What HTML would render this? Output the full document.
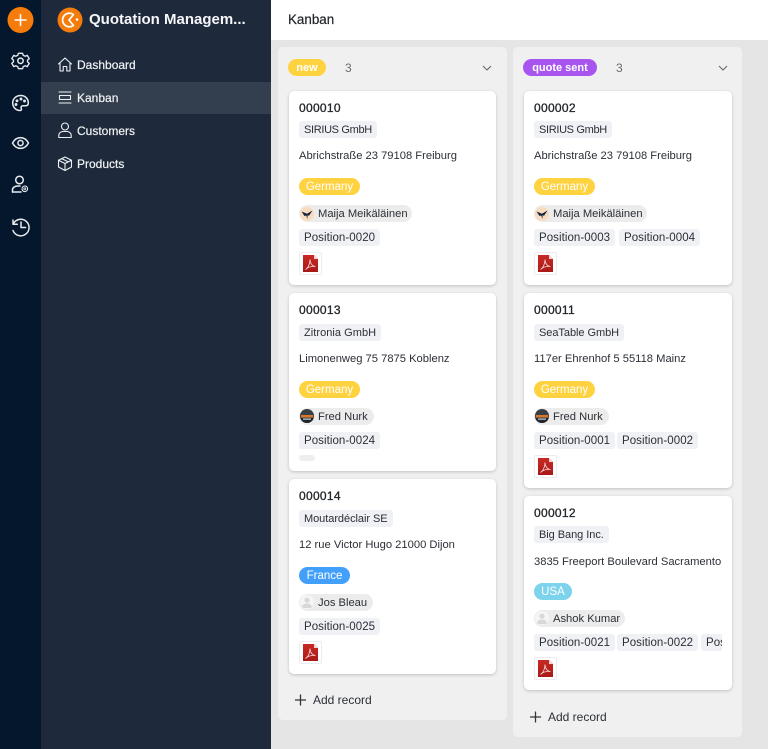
<!DOCTYPE html>
<html lang="en"><head><meta charset="utf-8"><title>Kanban</title>
<style>
*{box-sizing:border-box}
html,body{margin:0;padding:0;width:768px;height:749px;overflow:hidden;background:#e5e5e5;font-family:"Liberation Sans",Arial,sans-serif;color:#212529}
#wrap{position:absolute;left:0;top:0;width:768px;height:749px;overflow:hidden;filter:blur(.35px)}
.a{position:absolute}
#rail{left:0;top:0;width:41px;height:749px;background:#05172c}
#side{left:41px;top:0;width:230px;height:749px;background:#1e293b}
#active{left:41px;top:82px;width:230px;height:32px;background:#333e4e}
#head{left:271px;top:0;width:497px;height:40px;background:#fff;font-size:13.4px;line-height:40px;padding-left:17px;color:#212529;-webkit-text-stroke:.2px #212529}
.nav{left:77px;width:150px;font-size:12px;line-height:16px;color:#f1f3f5;-webkit-text-stroke:.2px #f1f3f5}
.col{background:#f0f0f0;border-radius:5px}
.card{left:11px;background:#fff;border-radius:5px;box-shadow:0 1px 3px rgba(0,0,0,.2);overflow:hidden}
.t{left:10px;font-size:12px;line-height:16px;white-space:nowrap;letter-spacing:.3px;-webkit-text-stroke:.3px #212529}
.tag{height:17px;background:#f0f1f5;border-radius:3px;font-size:11.5px;line-height:19px;padding:0 5px;white-space:nowrap;color:#2b2f36;overflow:hidden}
.p{letter-spacing:.06px}
.addr{left:10px;width:188px;font-size:11.2px;line-height:16px;white-space:nowrap;overflow:hidden;color:#2b2f36}
.pill{left:10px;height:17px;border-radius:9px;color:#fff;font-size:11.5px;line-height:18.500px;text-align:center}
.coll{left:10px;height:17px;border-radius:9px;background:#ececec;font-size:11.2px;line-height:19px;padding-left:19px;white-space:nowrap;color:#2b2f36}
.ava{left:11px;width:14px;height:14px;border-radius:50%;overflow:hidden}
.pdf{left:10px;width:23px;height:23px;border:1px solid #ececec;border-radius:2px}
.clip{left:10px;width:188px;overflow:hidden}
.count{font-size:12px;color:#6b6b6b;line-height:16px}
.stat{height:17px;border-radius:9px;color:#fff;font-size:11px;font-weight:bold;line-height:18px;text-align:center}
.add{font-size:12px;line-height:16px;color:#2b2f36}
.co{font-size:11px;letter-spacing:-.05px}
</style></head><body>
<svg width="0" height="0" style="position:absolute"><defs>
<linearGradient id="pg" x1="0" y1="0" x2="0" y2="1"><stop offset="0" stop-color="#c92a26"/><stop offset="1" stop-color="#a81a18"/></linearGradient>
<symbol id="pdfi" viewBox="0 0 15 17"><path d="M0 0H11L15 4V17H0Z" fill="url(#pg)"/><path d="M11 0L15 4H11Z" fill="#f3d6d6"/><path d="M2.500 14.500C5 13 7 9 7 4.500C7 8 9 11 12.500 11.500C9 11 5 12 2.500 14.500Z" fill="none" stroke="#f8dcdc" stroke-width=".8"/></symbol>
<symbol id="maija" viewBox="0 0 14 14"><rect width="14" height="14" fill="#f7dcc0"/><path d="M1.500 4.500L7 6.800L12.500 3.500L9 8.800L7.500 8.300L7.500 12L6.200 8.500L4.500 9Z" fill="#14233f"/></symbol>
<symbol id="fred" viewBox="0 0 14 14"><rect width="14" height="14" fill="#3a3f45"/><rect x="1" y="6" width="12" height="2.500" fill="#d9782c"/><rect y="9" width="14" height="5" fill="#20252b"/><rect x="3" y="9.500" width="8" height="1.200" fill="#cfd6dc"/></symbol>
<symbol id="anon" viewBox="0 0 14 14"><rect width="14" height="14" fill="#f5f5f5"/><circle cx="7" cy="5.200" r="2.600" fill="#d8d8d8"/><path d="M2 13C2 9.500 4.500 8.500 7 8.500S12 9.500 12 13Z" fill="#d8d8d8"/></symbol>
</defs></svg>
<div id="wrap">
<div class="a" id="rail"></div>
<div class="a" id="side"></div>
<div class="a" id="active"></div>
<div class="a" id="head">Kanban</div>

<!-- rail icons -->
<svg class="a" style="left:0;top:0" width="41" height="245" viewBox="0 0 41 245" fill="none" stroke="#e8ecf0" stroke-width="1.500" stroke-linecap="round" stroke-linejoin="round">
<circle cx="20.500" cy="20" r="13" fill="#f57c0a" stroke="none"/>
<path d="M20.500 14.500V25.500M15 20H26" stroke="#fff" stroke-width="1.600"/>
<path d="M18.200 52.500H22.800L23.600 54.800L25.800 55.700L28 54.700L30.200 58.500L28.300 60L28.300 62L30.200 63.500L28 67.300L25.800 66.300L23.600 67.200L22.800 69.500H18.200L17.400 67.200L15.200 66.300L13 67.300L10.800 63.500L12.700 62L12.700 60L10.800 58.500L13 54.700L15.200 55.700L17.400 54.800Z" transform="translate(2.050 6.100) scale(.9)"/>
<circle cx="20.500" cy="60.800" r="2.700"/>
<path d="M20.800 95.500C15.800 95.500 12.700 99 12.700 103C12.700 107.200 16 110.500 20 110.500C21.500 110.500 21.800 109.500 21.300 108.500C20.600 107 21.500 105.800 23 105.800H25.500C27.300 105.800 28.300 104.700 28.300 103C28.300 98.800 25.300 95.500 20.800 95.500Z"/>
<circle cx="17" cy="100.800" r=".7"/><circle cx="21" cy="99" r=".7"/><circle cx="24.500" cy="101" r=".7"/><circle cx="16" cy="104.500" r=".7"/>
<path d="M12.500 143C14.500 139.300 17.300 137.600 20.500 137.600S26.500 139.300 28.500 143C26.500 146.700 23.700 148.400 20.500 148.400S14.500 146.700 12.500 143Z"/>
<circle cx="20.500" cy="143" r="2.600"/>
<circle cx="19.500" cy="180" r="3.800"/>
<path d="M12.500 192V189.800C12.500 187.500 15 186 18 186H20"/>
<path d="M12.500 192H21"/>
<circle cx="24.800" cy="188.800" r="2.800" stroke-width="1.100" stroke-dasharray="1.500 .8"/>
<circle cx="24.800" cy="188.800" r="1" stroke-width=".8"/>
<path d="M13.500 223.500A8.300 8.300 0 1 1 13 230.500"/>
<path d="M13 220V224.300H17.300"/>
<path d="M21 222V227.500H25.500"/>
</svg>

<!-- logo -->
<svg class="a" style="left:57px;top:7px" width="26" height="26" viewBox="0 0 26 26">
<circle cx="13" cy="13" r="12.500" fill="#f57c0a"/>
<path d="M16.500 7.600A6.800 6.800 0 1 0 16.500 18.400L12 13Z" fill="none" stroke="#fff" stroke-width="1.700" stroke-linejoin="round"/>
<circle cx="20" cy="12.500" r="1.300" fill="#fff"/>
</svg>
<div class="a" style="left:89px;top:11px;width:170px;font-size:15px;line-height:18px;font-weight:bold;color:#f6f7f8;white-space:nowrap">Quotation Managem...</div>

<!-- nav -->
<svg class="a" style="left:57px;top:56px" width="16" height="120" viewBox="0 0 16 120" fill="none" stroke="#eef1f4" stroke-width="1.100" stroke-linejoin="round" stroke-linecap="round">
<path d="M1.500 8L8 2L14.500 8M3 7V15H6.200V10.500H9.800V15H13V7"/>
<path d="M2 36H14M2 47H14M2.500 39.500H13.500V43.500H2.500Z"/>
<circle cx="8" cy="70.500" r="3.500"/><path d="M1.800 81.500V79.500C1.800 76.800 4 75.500 6 75.500H10C12 75.500 14.200 76.800 14.200 79.500V81.500Z"/>
<path d="M8 101L14.500 104.200V111L8 114.500L1.500 111V104.200ZM1.500 104.200L8 107.500L14.500 104.200M8 107.500V114.500M4.700 102.600L11.300 105.900"/>
</svg>
<div class="a nav" style="top:57px">Dashboard</div>
<div class="a nav" style="top:90px">Kanban</div>
<div class="a nav" style="top:123px">Customers</div>
<div class="a nav" style="top:156px">Products</div>

<!-- column 1 -->
<div class="a col" style="left:278px;top:47px;width:229px;height:673px">
  <div class="a stat" style="left:10px;top:12px;width:38px;background:#ffd23f">new</div>
  <div class="a count" style="left:67px;top:13px">3</div>
  <svg class="a" style="left:203px;top:16px" width="12" height="10" viewBox="0 0 12 10" fill="none" stroke="#666" stroke-width="1.100"><path d="M2 3L6 7L10 3"/></svg>

  <div class="a card" style="top:44px;width:207px;height:194px">
    <div class="a t" style="top:9px">000010</div>
    <div class="a tag co" style="left:10px;top:30px;letter-spacing:-.33px">SIRIUS GmbH</div>
    <div class="a addr" style="top:57px">Abrichstraße 23 79108 Freiburg</div>
    <div class="a pill" style="top:87px;width:61px;background:#ffd23f">Germany</div>
    <div class="a coll" style="top:114px;width:113px">Maija Meikäläinen</div>
    <svg class="a ava" style="top:115.500px"><use href="#maija"/></svg>
    <div class="a tag p" style="left:10px;top:138px">Position-0020</div>
    <div class="a pdf" style="top:161px"><svg class="a" style="left:3px;top:2px" width="15" height="17"><use href="#pdfi"/></svg></div>
  </div>

  <div class="a card" style="top:246px;width:207px;height:178px">
    <div class="a t" style="top:9px">000013</div>
    <div class="a tag co" style="left:10px;top:31px;letter-spacing:.05px">Zitronia GmbH</div>
    <div class="a addr" style="top:58px">Limonenweg 75 7875 Koblenz</div>
    <div class="a pill" style="top:88px;width:61px;background:#ffd23f">Germany</div>
    <div class="a coll" style="top:115px;width:75px">Fred Nurk</div>
    <svg class="a ava" style="top:116px"><use href="#fred"/></svg>
    <div class="a tag p" style="left:10px;top:139px">Position-0024</div>
    <div class="a" style="left:10px;top:162px;width:16px;height:6px;border-radius:3px;background:#eceef0"></div>
  </div>

  <div class="a card" style="top:432px;width:207px;height:195px">
    <div class="a t" style="top:9px">000014</div>
    <div class="a tag co" style="left:10px;top:31px">Moutardéclair SE</div>
    <div class="a addr" style="top:58px">12 rue Victor Hugo 21000 Dijon</div>
    <div class="a pill" style="top:88px;width:51px;background:#43a0fa">France</div>
    <div class="a coll" style="top:115px;width:74px">Jos Bleau</div>
    <svg class="a ava" style="top:116px"><use href="#anon"/></svg>
    <div class="a tag p" style="left:10px;top:139px">Position-0025</div>
    <div class="a pdf" style="top:162px"><svg class="a" style="left:3px;top:2px" width="15" height="17"><use href="#pdfi"/></svg></div>
  </div>

  <svg class="a" style="left:17px;top:647px" width="11" height="12" viewBox="0 0 11 12" fill="none" stroke="#333" stroke-width="1.300"><path d="M5.500 .500V11.500M0 6H11"/></svg>
  <div class="a add" style="left:35px;top:645px">Add record</div>
</div>

<!-- column 2 -->
<div class="a col" style="left:513px;top:47px;width:229px;height:690px">
  <div class="a stat" style="left:10px;top:12px;width:74px;background:#a855f0">quote sent</div>
  <div class="a count" style="left:103px;top:13px">3</div>
  <svg class="a" style="left:204px;top:16px" width="12" height="10" viewBox="0 0 12 10" fill="none" stroke="#666" stroke-width="1.100"><path d="M2 3L6 7L10 3"/></svg>

  <div class="a card" style="top:44px;width:208px;height:194px">
    <div class="a t" style="top:9px">000002</div>
    <div class="a tag co" style="left:10px;top:30px;letter-spacing:-.33px">SIRIUS GmbH</div>
    <div class="a addr" style="top:57px">Abrichstraße 23 79108 Freiburg</div>
    <div class="a pill" style="top:87px;width:61px;background:#ffd23f">Germany</div>
    <div class="a coll" style="top:114px;width:113px">Maija Meikäläinen</div>
    <svg class="a ava" style="top:115.500px"><use href="#maija"/></svg>
    <div class="a tag p" style="left:10px;top:138px">Position-0003</div>
    <div class="a tag p" style="left:95px;top:138px">Position-0004</div>
    <div class="a pdf" style="top:161px"><svg class="a" style="left:3px;top:2px" width="15" height="17"><use href="#pdfi"/></svg></div>
  </div>

  <div class="a card" style="top:246px;width:208px;height:195px">
    <div class="a t" style="top:9px">000011</div>
    <div class="a tag co" style="left:10px;top:31px;letter-spacing:-.05px">SeaTable GmbH</div>
    <div class="a addr" style="top:58px">117er Ehrenhof 5 55118 Mainz</div>
    <div class="a pill" style="top:88px;width:61px;background:#ffd23f">Germany</div>
    <div class="a coll" style="top:115px;width:75px">Fred Nurk</div>
    <svg class="a ava" style="top:116px"><use href="#fred"/></svg>
    <div class="a tag p" style="left:10px;top:139px">Position-0001</div>
    <div class="a tag p" style="left:93px;top:139px">Position-0002</div>
    <div class="a pdf" style="top:162px"><svg class="a" style="left:3px;top:2px" width="15" height="17"><use href="#pdfi"/></svg></div>
  </div>

  <div class="a card" style="top:449px;width:208px;height:194px">
    <div class="a t" style="top:9px">000012</div>
    <div class="a tag co" style="left:10px;top:30px">Big Bang Inc.</div>
    <div class="a addr" style="top:58px">3835 Freeport Boulevard Sacramento</div>
    <div class="a pill" style="top:87px;width:38px;background:#7dd3ec">USA</div>
    <div class="a coll" style="top:114px;width:91px">Ashok Kumar</div>
    <svg class="a ava" style="top:115px"><use href="#anon"/></svg>
    <div class="a clip" style="top:138px;height:17px">
      <div class="a tag p" style="left:0;top:0">Position-0021</div>
      <div class="a tag p" style="left:83px;top:0">Position-0022</div>
      <div class="a tag p" style="left:167px;top:0">Position-0023</div>
    </div>
    <div class="a pdf" style="top:161px"><svg class="a" style="left:3px;top:2px" width="15" height="17"><use href="#pdfi"/></svg></div>
  </div>

  <svg class="a" style="left:17px;top:664px" width="11" height="12" viewBox="0 0 11 12" fill="none" stroke="#333" stroke-width="1.300"><path d="M5.500 .500V11.500M0 6H11"/></svg>
  <div class="a add" style="left:35px;top:662px">Add record</div>
</div>
</div>
</body></html>
